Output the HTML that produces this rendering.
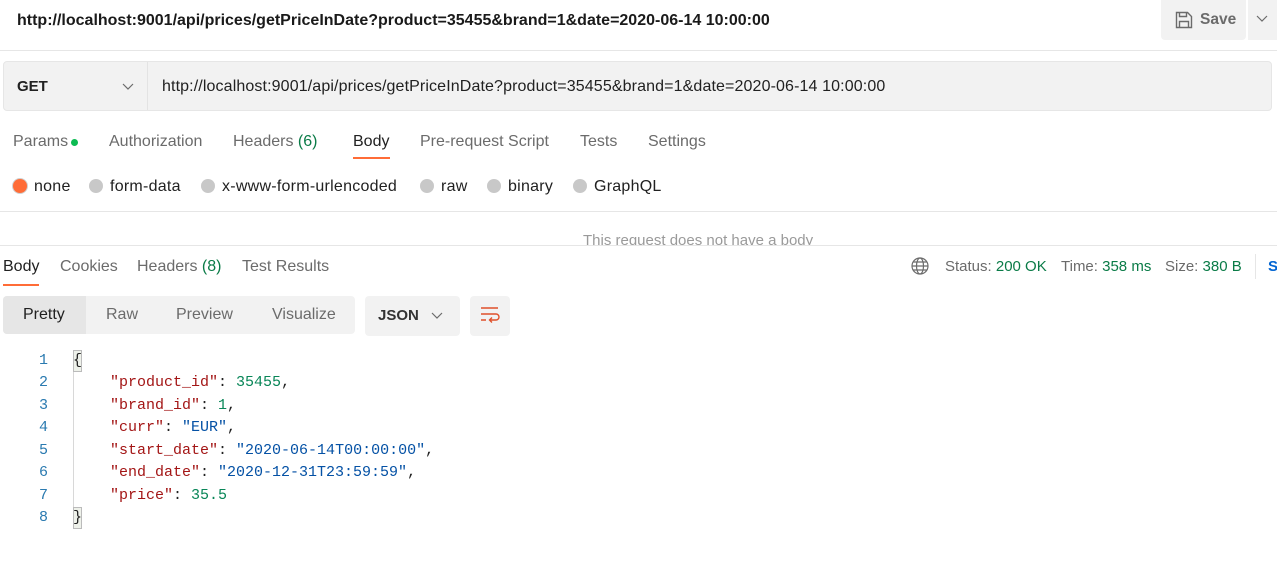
<!DOCTYPE html>
<html><head><meta charset="utf-8"><style>
*{margin:0;padding:0;box-sizing:border-box}
body{width:1277px;height:567px;overflow:hidden;background:#fff;font-family:"Liberation Sans",sans-serif;color:#212121;position:relative}
.a{position:absolute;white-space:nowrap}
.g{color:#6b6b6b}
.hr{position:absolute;left:0;width:1277px;height:1px;background:#e6e6e6}
.mono{font-family:"Liberation Mono",monospace;font-size:15px}
.k{color:#a31515}.n{color:#098658}.s{color:#0451a5}
.ln{position:absolute;left:20px;width:28px;text-align:right;color:#2a7ab0}
.radio{position:absolute;width:14px;height:14px;border-radius:50%;background:#c8c8c8;top:179px}
.t{font-size:16px;top:133px}
.r{font-size:16px;top:178px;letter-spacing:0.25px}
</style></head><body>
<div class="a" style="left:17px;top:12px;font-size:16px;font-weight:bold;color:#1a1a1a">http://localhost:9001/api/prices/getPriceInDate?product=35455&amp;brand=1&amp;date=2020-06-14 10:00:00</div>
<div class="a" style="left:1161px;top:0;width:85px;height:40px;background:#f2f2f2;border-radius:0 0 4px 4px"></div>
<svg class="a" style="left:1175px;top:11px" width="18" height="18" viewBox="0 0 18 18" fill="none" stroke="#6b6b6b" stroke-width="1.4"><path d="M1.5 1.5h11l4 4v11h-15z"/><path d="M4.5 1.5v4h7v-4"/><path d="M4.5 16.5v-6h9v6"/></svg>
<div class="a" style="left:1200px;top:11px;font-size:15.5px;font-weight:bold;color:#6b6b6b">Save</div>
<div class="a" style="left:1248px;top:0;width:29px;height:40px;background:#f2f2f2"></div>
<svg class="a" style="left:1256px;top:15px" width="12" height="8"><path d="M1 1l5 5 5-5" stroke="#6b6b6b" fill="none" stroke-width="1.2"/></svg>
<div class="hr" style="top:50px"></div>

<div class="a" style="left:3px;top:61px;width:1269px;height:50px;background:#f2f2f2;border:1px solid #e6e6e6;border-radius:4px"></div>
<div class="a" style="left:147px;top:62px;width:1px;height:48px;background:#e3e3e3"></div>
<div class="a" style="left:17px;top:78px;font-size:15px;font-weight:bold">GET</div>
<svg class="a" style="left:122px;top:83px" width="12" height="8"><path d="M1 1l5 5 5-5" stroke="#6b6b6b" fill="none" stroke-width="1.2"/></svg>
<div class="a" style="left:162px;top:78px;font-size:16px;letter-spacing:0.12px">http://localhost:9001/api/prices/getPriceInDate?product=35455&amp;brand=1&amp;date=2020-06-14 10:00:00</div>

<div class="a g t" style="left:13px">Params</div>
<div class="a" style="left:71px;top:139px;width:7px;height:7px;border-radius:50%;background:#0cbb52"></div>
<div class="a g t" style="left:109px">Authorization</div>
<div class="a g t" style="left:233px">Headers <span style="color:#0a7b47">(6)</span></div>
<div class="a t" style="left:353px">Body</div>
<div class="a" style="left:353px;top:157px;width:37px;height:2px;background:#ff6c37"></div>
<div class="a g t" style="left:420px">Pre-request Script</div>
<div class="a g t" style="left:580px">Tests</div>
<div class="a g t" style="left:648px">Settings</div>

<div class="radio" style="left:13px;background:#ff6c37;box-shadow:0 0 0 1px #d0d0d0"></div>
<div class="a r" style="left:34px">none</div>
<div class="radio" style="left:89px"></div><div class="a r" style="left:110px">form-data</div>
<div class="radio" style="left:201px"></div><div class="a r" style="left:222px">x-www-form-urlencoded</div>
<div class="radio" style="left:420px"></div><div class="a r" style="left:441px">raw</div>
<div class="radio" style="left:487px"></div><div class="a r" style="left:508px">binary</div>
<div class="radio" style="left:573px"></div><div class="a r" style="left:594px">GraphQL</div>
<div class="hr" style="top:211px"></div>
<div class="a" style="left:0;top:212px;width:1277px;height:33px;overflow:hidden"><div class="a" style="left:583px;top:20px;font-size:15px;color:#9a9a9a">This request does not have a body</div></div>
<div class="hr" style="top:245px"></div>

<div class="a" style="left:3px;top:258px;font-size:16px">Body</div>
<div class="a" style="left:3px;top:284px;width:36px;height:2px;background:#ff6c37"></div>
<div class="a g" style="left:60px;top:258px;font-size:16px">Cookies</div>
<div class="a g" style="left:137px;top:258px;font-size:16px">Headers <span style="color:#0a7b47">(8)</span></div>
<div class="a g" style="left:242px;top:258px;font-size:16px">Test Results</div>
<svg class="a" style="left:911px;top:257px" width="18" height="18" viewBox="0 0 18 18" fill="none" stroke="#6b6b6b" stroke-width="1.2"><circle cx="9" cy="9" r="8"/><ellipse cx="9" cy="9" rx="3.5" ry="8"/><path d="M1 9h16M2.5 5h13M2.5 13h13"/></svg>
<div class="a g" style="left:945px;top:258px;font-size:15px">Status: <span style="color:#0a7b47">200 OK</span></div>
<div class="a g" style="left:1061px;top:258px;font-size:15px">Time: <span style="color:#0a7b47">358 ms</span></div>
<div class="a g" style="left:1165px;top:258px;font-size:15px">Size: <span style="color:#0a7b47">380 B</span></div>
<div class="a" style="left:1255px;top:254px;width:1px;height:25px;background:#e6e6e6"></div>
<div class="a" style="left:1268px;top:258px;font-size:15px;font-weight:bold;color:#0265d2">S</div>

<div class="a" style="left:3px;top:296px;width:352px;height:38px;background:#f2f2f2;border-radius:4px"></div>
<div class="a" style="left:3px;top:296px;width:83px;height:38px;background:#e6e6e6;border-radius:4px 0 0 4px"></div>
<div class="a" style="left:23px;top:306px;font-size:16px">Pretty</div>
<div class="a g" style="left:106px;top:306px;font-size:16px">Raw</div>
<div class="a g" style="left:176px;top:306px;font-size:16px">Preview</div>
<div class="a g" style="left:272px;top:306px;font-size:16px">Visualize</div>
<div class="a" style="left:365px;top:296px;width:95px;height:40px;background:#f2f2f2;border-radius:4px"></div>
<div class="a" style="left:378px;top:307px;font-size:15px;font-weight:bold;color:#333">JSON</div>
<svg class="a" style="left:431px;top:312px" width="12" height="8"><path d="M1 1l5 5 5-5" stroke="#6b6b6b" fill="none" stroke-width="1.2"/></svg>
<div class="a" style="left:470px;top:296px;width:40px;height:40px;background:#f2f2f2;border-radius:4px"></div>
<svg class="a" style="left:479px;top:306px" width="22" height="20" viewBox="0 0 22 20" fill="none" stroke="#e0502a" stroke-width="1.4"><path d="M2 2h17M2 8h15a3 3 0 0 1 0 6h-6M13 11.5l-2.5 2.5 2.5 2.5M2 14h5"/></svg>

<div class="a" style="left:73px;top:350px;width:1px;height:178px;background:#d8d8d8"></div>
<div class="mono">
<div class="ln a" style="top:352px">1</div><div class="ln a" style="top:374px">2</div><div class="ln a" style="top:397px">3</div><div class="ln a" style="top:419px">4</div><div class="ln a" style="top:442px">5</div><div class="ln a" style="top:464px">6</div><div class="ln a" style="top:487px">7</div><div class="ln a" style="top:509px">8</div>
<div class="a" style="left:73px;top:350px;width:9px;height:22px;background:#eef1ea;border:1px solid #bbb"></div>
<div class="a" style="left:73px;top:352px">{</div>
<div class="a" style="left:110px;top:374px"><span class="k">"product_id"</span>: <span class="n">35455</span>,</div>
<div class="a" style="left:110px;top:397px"><span class="k">"brand_id"</span>: <span class="n">1</span>,</div>
<div class="a" style="left:110px;top:419px"><span class="k">"curr"</span>: <span class="s">"EUR"</span>,</div>
<div class="a" style="left:110px;top:442px"><span class="k">"start_date"</span>: <span class="s">"2020-06-14T00:00:00"</span>,</div>
<div class="a" style="left:110px;top:464px"><span class="k">"end_date"</span>: <span class="s">"2020-12-31T23:59:59"</span>,</div>
<div class="a" style="left:110px;top:487px"><span class="k">"price"</span>: <span class="n">35.5</span></div>
<div class="a" style="left:73px;top:507px;width:9px;height:22px;background:#eef1ea;border:1px solid #bbb"></div>
<div class="a" style="left:73px;top:509px">}</div>
</div>
</body></html>
